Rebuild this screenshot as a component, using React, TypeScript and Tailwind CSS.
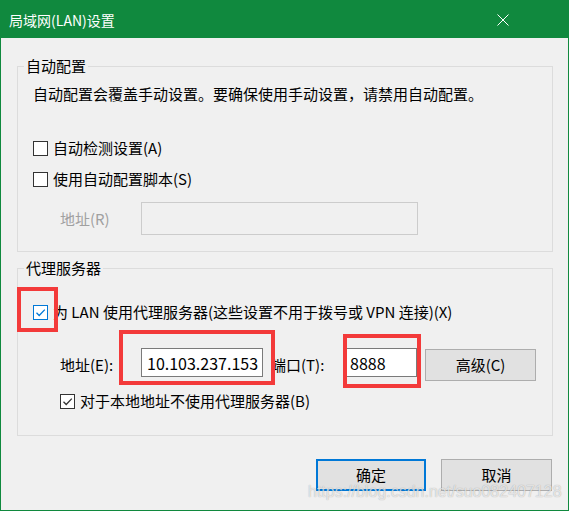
import React from 'react';

const font = { fontFamily: '"Noto Sans CJK SC", "Noto Sans", sans-serif' };

function CheckBox({ checked, tone }: { checked?: boolean; tone: 'blue' | 'dark' }) {
  const border = tone === 'blue' ? 'border-[#0078d7]' : 'border-[#333333]';
  const stroke = tone === 'blue' ? '#0078d7' : '#333333';
  return (
    <span className={`flex h-[15px] w-[15px] shrink-0 items-center justify-center border bg-white ${border}`}>
      {checked && (
        <svg width="13" height="13" viewBox="0 0 13 13" fill="none">
          <path d="M2.5 6.8 L5.2 9.5 L10.8 3.6" stroke={stroke} strokeWidth="1.3" />
        </svg>
      )}
    </span>
  );
}

export default function App() {
  return (
    <div
      className="relative flex h-[511px] w-[569px] flex-col border border-[#10893e] bg-[#f0f0f0] text-[15px] leading-[20px] text-black"
      style={font}
    >
      {/* 标题栏 */}
      <div className="flex h-[37px] shrink-0 items-center justify-between bg-[#10893e] pl-[8px] text-[14px] text-white">
        <span>局域网(LAN)设置</span>
        <svg className="mr-[59px]" width="12" height="12" viewBox="0 0 12 12" fill="none">
          <path d="M0.5 0.5 L11.5 11.5 M11.5 0.5 L0.5 11.5" stroke="#ffffff" strokeWidth="1" />
        </svg>
      </div>

      {/* 自动配置 */}
      <fieldset className="ml-[16px] mr-[15px] mt-[18px] border border-[#dcdcdc]">
        <legend className="ml-[6px] px-[2px]">自动配置</legend>
        <div className="pb-[16px] pl-[15px]">
          <p className="mt-[8px]">自动配置会覆盖手动设置。要确保使用手动设置，请禁用自动配置。</p>
          <label className="mt-[34px] flex h-[20px] items-center gap-[5px]">
            <CheckBox tone="dark" />
            <span>自动检测设置(A)</span>
          </label>
          <label className="mt-[11px] flex h-[20px] items-center gap-[5px]">
            <CheckBox tone="dark" />
            <span>使用自动配置脚本(S)</span>
          </label>
          <div className="ml-[27px] mt-[13px] flex items-center">
            <span className="w-[81px] text-[#a0a0a0]">地址(R)</span>
            <div className="h-[33px] w-[277px] border border-[#cccccc] bg-[#f0f0f0]" />
          </div>
        </div>
      </fieldset>

      {/* 代理服务器 */}
      <fieldset className="ml-[16px] mr-[15px] mt-[6px] border border-[#dcdcdc]">
        <legend className="ml-[6px] px-[2px]">代理服务器</legend>
        <div className="pb-[24px] pl-[15px]">
          <label className="mt-[24px] flex h-[20px] items-center gap-[5px]">
            <CheckBox tone="blue" checked />
            <span>为 LAN 使用代理服务器(这些设置不用于拨号或 VPN 连接)(X)</span>
          </label>
          <div className="ml-[27px] mt-[26px] flex h-[33px] items-start">
            <span className="mt-[7px] w-[81px]">地址(E):</span>
            <div className="flex h-[29px] w-[122px] items-center border border-[#7a7a7a] bg-white px-[5px] text-[16px]">
              10.103.237.153
            </div>
            <span className="ml-[8px] mt-[7px] w-[75px]">端口(T):</span>
            <div className="flex h-[29px] w-[71px] items-center border border-[#7a7a7a] bg-white px-[3px] text-[16px]">
              8888
            </div>
            <button className="ml-[8px] mt-[1px] h-[32px] w-[111px] border border-[#adadad] bg-[#e1e1e1]">
              高级(C)
            </button>
          </div>
          <label className="ml-[27px] mt-[10px] flex h-[20px] items-center gap-[5px]">
            <CheckBox tone="dark" checked />
            <span>对于本地地址不使用代理服务器(B)</span>
          </label>
        </div>
      </fieldset>

      {/* 按钮 */}
      <div className="mt-[23px] flex justify-end gap-[15px] pr-[16px]">
        <button className="h-[32px] w-[110px] border-2 border-[#0078d7] bg-[#e1e1e1]">确定</button>
        <button className="h-[32px] w-[111px] border border-[#adadad] bg-[#e1e1e1]">取消</button>
      </div>

      {/* 标注框 */}
      <div className="pointer-events-none absolute left-[16px] top-[286px] h-[45px] w-[41px] border-[4px] border-[#f33a3a]" />
      <div className="pointer-events-none absolute left-[118px] top-[329px] h-[55px] w-[156px] border-[4px] border-[#f33a3a]" />
      <div className="pointer-events-none absolute left-[342px] top-[333px] h-[54px] w-[78px] border-[4px] border-[#f33a3a]" />

      {/* 水印 */}
      <span
        className="pointer-events-none absolute left-[307px] top-[481px] text-[16px] leading-[20px] text-white/70 [text-shadow:0_0_1px_rgba(0,0,0,0.35)]"
        style={{ fontFamily: '"Liberation Sans", Arial, sans-serif' }}
      >
        https://blog.csdn.net/suo082407128
      </span>
    </div>
  );
}
